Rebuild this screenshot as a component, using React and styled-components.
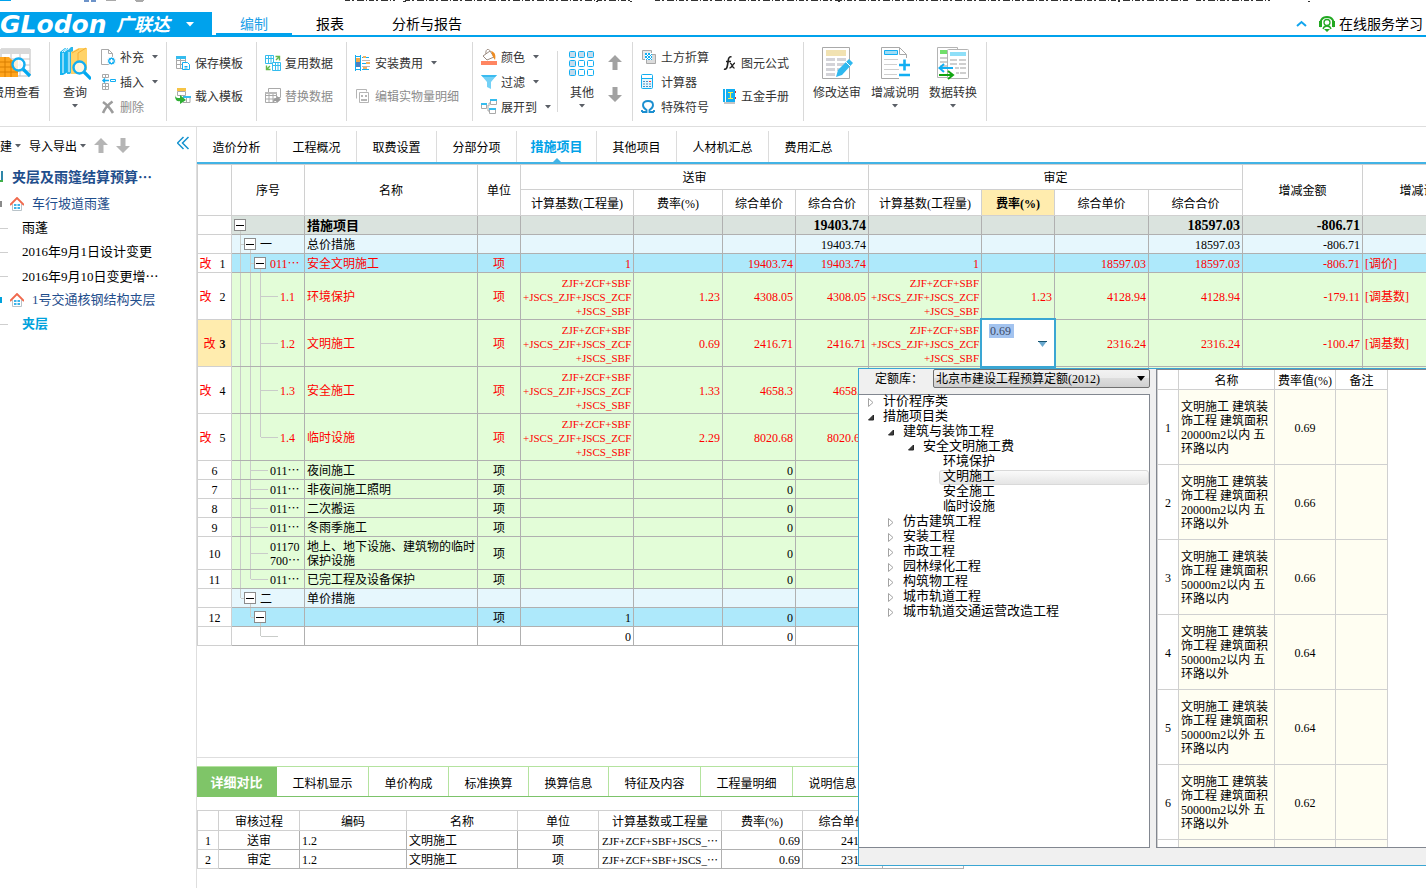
import React from 'react';
import styled, { createGlobalStyle, css } from 'styled-components';

const CJK = '"Noto Sans CJK SC", sans-serif';
const SONG = '"Liberation Serif", "Noto Sans CJK SC", serif';

const GlobalStyle = createGlobalStyle`
  *, *::before, *::after { box-sizing: border-box; }
  body { margin: 0; background: #fff; overflow: hidden; font: 12px/14px ${SONG}; color: #000; }
  button, input, select { font: inherit; color: inherit; margin: 0; }
  button { border: 0; background: none; padding: 0; white-space: nowrap; }
  a { color: inherit; text-decoration: none; }
  svg { display: block; flex: none; }
`;

/* ---------- shell ---------- */

const Page = styled.div`
  display: flex;
  flex-direction: column;
  height: 100vh;
`;

const TitleStrip = styled.div`
  flex: none;
  height: 12px;
  overflow: hidden;
`;

const NavBar = styled.header`
  display: flex;
  flex: none;
  height: 25px;
  font: 14px/22px ${CJK};
  border-bottom: 2px solid #00a2ec;
`;

const Brand = styled.button`
  display: flex;
  align-items: center;
  width: 212px;
  height: 25px;
  background: #00a2ec;
  color: #fff;
  overflow: hidden;
`;

const BrandLatin = styled.span`
  font: italic bold 25px/24px "DejaVu Sans", sans-serif;
  width: 116px;
  text-align: left;
`;

const BrandCjk = styled.span`
  font: italic bold 18px/24px ${CJK};
  width: 70px;
  padding-bottom: 4px;
  text-align: left;
`;

const NavTabs = styled.nav`
  display: flex;
  flex: 1;
  padding-left: 4px;
`;

const NavTab = styled.a`
  height: 25px;
  padding: 0 24px;
  color: ${(p) => (p.$active ? '#1e9fe8' : '#000')};
  border-bottom: ${(p) => (p.$active ? '4px solid #00a2ec' : '0')};
`;

const Service = styled.a`
  display: flex;
  align-items: center;
  gap: 4px;
  height: 23px;
  padding-right: 3px;
  line-height: 23px;
`;

const CaretUp = styled.button`
  display: flex;
  align-items: center;
  height: 23px;
  margin-right: 12px;
`;

/* ---------- ribbon ---------- */

const Ribbon = styled.div`
  display: flex;
  flex: none;
  height: 90px;
  padding: 5px 0;
  border-bottom: 1px solid #dedede;
  font: 12px/16px ${CJK};
  color: #333;
`;

const Group = styled.div`
  display: flex;
  flex: none;
  height: 79px;
  width: ${(p) => p.$w}px;
  padding-left: ${(p) => p.$pad || 0}px;
  border-right: 1px solid #d9d9d9;
`;

const Stack = styled.div`
  display: flex;
  flex-direction: column;
  padding-top: ${(p) => (p.$two ? 4 : 2)}px;
  margin-left: ${(p) => p.$gap || 0}px;
  width: ${(p) => p.$w || 'auto'};
`;

const SmallButton = styled.button`
  display: flex;
  align-items: center;
  gap: 4px;
  height: ${(p) => (p.$tall ? 33 : 25)}px;
  color: ${(p) => (p.$muted ? '#8c8c8c' : '#333')};

  svg + span + svg { margin-left: 4px; }
`;

const BigButton = styled.button`
  display: flex;
  flex-direction: column;
  align-items: center;
  flex: none;
  width: ${(p) => p.$w || 58}px;
  margin-left: ${(p) => (p.$clipped ? -13 : 0)}px;
  padding-top: 4px;
  gap: 4px;
`;

const Divider = styled.div`
  width: 1px;
  height: 61px;
  margin: 9px 0 0 ${(p) => p.$gap}px;
  background: #d9d9d9;
`;

const ArrowStack = styled.div`
  display: flex;
  flex-direction: column;
  gap: 17px;
  padding: 13px 0 0 2px;
`;

/* ---------- sidebar ---------- */

const Body = styled.div`
  display: flex;
  flex: 1;
  min-height: 0;
`;

const Sidebar = styled.aside`
  flex: none;
  width: 197px;
  border-right: 1px solid #dedede;
  font-size: 13px;
`;

const SideTools = styled.div`
  display: flex;
  align-items: center;
  height: 37px;
  gap: 8px;
  font: 12px/16px ${CJK};

  button { display: flex; align-items: center; gap: 3px; }
`;

const Collapse = styled.button`
  margin: 0 6px 6px auto;
`;

const ProjectTitle = styled.div`
  display: flex;
  align-items: center;
  gap: 8px;
  height: 26px;
  margin-bottom: 2px;
  font-size: 14px;
  font-weight: bold;
  color: #1f4e8c;
`;

const TreeItem = styled.a`
  display: flex;
  align-items: center;
  height: 24px;
  gap: ${(p) => (p.$house ? 8 : 14)}px;
  color: ${(p) => (p.$current ? '#00a2dc' : p.$house ? '#1f4e8c' : '#000')};
  font-weight: ${(p) => (p.$current ? 'bold' : 'normal')};
`;

const Stub = styled.i`
  width: ${(p) => (p.$mark ? 2 : 8)}px;
  height: ${(p) => (p.$mark ? 6 : 1)}px;
  background: ${(p) => p.$mark || '#cfcfcf'};
`;

const Dots = styled.span`
  display: inline-block;
  line-height: 1;
  font-family: ${CJK};
`;

/* ---------- main panel ---------- */

const Content = styled.main`
  position: relative;
  display: flex;
  flex-direction: column;
  flex: 1;
  min-width: 0;
  overflow: hidden;
`;

const ModuleTabs = styled.nav`
  display: flex;
  flex: none;
  height: 37px;
  padding-top: 4px;
  border-bottom: 2px solid #42b3e5;
`;

const ModuleTab = styled.a`
  position: relative;
  flex: none;
  width: ${(p) => (p.$wide ? 92 : 80)}px;
  height: 31px;
  border-right: 1px solid #dcdcdc;
  text-align: center;
  line-height: 34px;
  ${(p) =>
    p.$active &&
    css`
      color: #00a2e8;
      font-size: 13px;
      font-weight: bold;
      line-height: 32px;
      &::after {
        content: '';
        position: absolute;
        left: 50%;
        bottom: 0;
        margin-left: -4px;
        border: 4px solid transparent;
        border-top: 0;
        border-bottom-color: #42b3e5;
      }
    `}
`;

const GridArea = styled.section`
  flex: 1;
  min-height: 0;
  overflow: hidden;
`;

const Sheet = styled.table`
  width: ${(p) => p.$w}px;
  table-layout: fixed;
  border-collapse: separate;
  border-spacing: 0;
  border-top: 1px solid #d0d0d0;
  border-left: 1px solid #d0d0d0;
`;

const HeadCell = styled.th`
  height: ${(p) => p.$h || 26}px;
  padding: 2px 0 0;
  font-weight: ${(p) => (p.$hot ? 'bold' : 'normal')};
  background: ${(p) => (p.$hot ? '#ffecae' : '#fff')};
  border: solid #d0d0d0;
  border-width: 0 1px 1px 0;
  white-space: nowrap;
  overflow: hidden;
`;

const ROW_FILL = { root: '#dae3de', section: '#e6f7fd', item: '#aee9fb', leaf: '#e3fdd8', blank: '#fff' };

const Cell = styled.td`
  position: ${(p) => (p.$host ? 'relative' : 'static')};
  height: ${(p) => p.$h || 19}px;
  padding: 2px 2px 0;
  border: solid #b0b0b0;
  border-width: 0 1px 1px 0;
  text-align: ${(p) => p.$align || 'right'};
  background: ${(p) => p.$fill || 'transparent'};
  font-size: ${(p) => (p.$formula ? 11 : 12)}px;
  overflow: ${(p) => (p.$host ? 'visible' : 'hidden')};
`;

const NumCell = styled(Cell)`
  padding: 2px ${(p) => (p.$changed && !p.$current ? 4 : 0)}px 0 0;
  border-color: #d0d0d0;
  background: ${(p) => (p.$current ? '#ffecae' : '#fff')};
  color: #000;
  font-weight: ${(p) => (p.$current ? 'bold' : 'normal')};
  text-align: center;
`;

const Changed = styled.span`
  margin-right: ${(p) => (p.$tight ? 4 : 8)}px;
  font-weight: normal;
  color: #f00;
`;

const Row = styled.tr`
  background: ${(p) => ROW_FILL[p.$kind]};
  color: ${(p) => (p.$red ? '#f00' : '#000')};

  ${(p) =>
    p.$kind === 'root' &&
    css`
      font-weight: bold;
      td { font-size: 14px; }
      td:nth-child(3) { font-size: 13px; }
    `}
`;

const guide = (g) => {
  const [dir, x, span] = g.split(':');
  const ink = 'linear-gradient(#c9ccc9, #c9ccc9)';
  if (dir === 'h') return `${ink} ${x}px center / ${span}px 1px no-repeat`;
  if (span === 'top') return `${ink} ${x}px top / 1px 50% no-repeat`;
  if (span === 'end') return `${ink} ${x}px bottom / 1px 50% no-repeat`;
  return `${ink} ${x}px top / 1px 100% no-repeat`;
};

const TreeCell = styled(Cell)`
  padding: 0;
  text-align: left;
  background: ${(p) => p.$guides.map(guide).join(', ')};
`;

const TreeInner = styled.div`
  display: flex;
  align-items: center;
  gap: 4px;
  padding-left: ${(p) => p.$indent}px;

  > span { padding-top: 2px; }
`;

const Toggle = styled.button`
  display: flex;
  align-items: center;
  justify-content: center;
  width: 12px;
  height: 12px;
  border: 1px solid #8c8c8c;
  background: #fff;

  &::before { content: ''; width: 8px; height: 1px; background: #000; }
`;

const Editor = styled.div`
  position: absolute;
  inset: -2px;
  z-index: 2;
  display: flex;
  flex-direction: column;
  align-items: flex-start;
  padding: 4px 7px;
  border: 2px solid #3aa6d3;
  background: #fff;
`;

const EditorInput = styled.input`
  width: 25px;
  height: 14px;
  padding: 0 1px;
  border: 0;
  outline: 0;
  background: #a3c3ef;
  color: #3d4a66;
`;

const EditorDrop = styled.button`
  align-self: flex-end;
  margin-top: 3px;
`;

/* ---------- lower panel ---------- */

const DetailPanel = styled.section`
  flex: none;
  height: 131px;
  padding-top: 8px;
  border-top: 1px solid #dedede;
`;

const DetailTabs = styled.nav`
  display: flex;
  height: 31px;
  margin-bottom: 13px;
  border-top: 1px solid #b4e39f;
  border-bottom: 1px solid #7cc36a;
`;

const DetailTab = styled.a`
  flex: none;
  width: ${(p) => (p.$wide ? 92 : 80)}px;
  height: ${(p) => (p.$active ? 30 : 29)}px;
  border-right: 1px solid ${(p) => (p.$active ? '#7fc568' : '#b4e39f')};
  text-align: center;
  line-height: ${(p) => (p.$active ? 32 : 34)}px;
  background: ${(p) => (p.$active ? '#7fc568' : 'none')};
  color: ${(p) => (p.$active ? '#fff' : '#000')};
  font-size: ${(p) => (p.$active ? 13 : 12)}px;
  font-weight: ${(p) => (p.$active ? 'bold' : 'normal')};
`;

/* ---------- drop-down panel ---------- */

const Popup = styled.div`
  position: absolute;
  z-index: 1;
  left: 661px;
  right: -2px;
  top: 241px;
  height: 498px;
  display: flex;
  gap: 6px;
  padding-bottom: 17px;
  border: 1px solid #3aa6d3;
  background: #f0f0f0;
`;

const PickerColumn = styled.div`
  display: flex;
  flex-direction: column;
  flex: none;
  width: 291px;
`;

const LibraryBar = styled.div`
  display: flex;
  align-items: center;
  gap: 10px;
  height: 25px;
  padding: 0 0 6px 16px;

  label { width: 48px; white-space: nowrap; }
`;

const SelectBox = styled.div`
  display: grid;
  flex: 1;

  > * { grid-area: 1 / 1; }
  > svg { justify-self: end; align-self: center; margin-right: 5px; pointer-events: none; }
`;

const Library = styled.select`
  appearance: none;
  height: 19px;
  padding: 0 2px;
  border: 1px solid #707070;
  border-radius: 2px;
  background: linear-gradient(#f2f2f2, #ebebeb 50%, #dddddd 50%, #cfcfcf);
  line-height: 16px;
`;

const NormTree = styled.ul`
  flex: 1;
  margin: 0;
  padding: 0;
  list-style: none;
  border: solid #828790;
  border-width: 1px 1px 1px 0;
  background: #fff;
  font-size: 13px;
  line-height: 14px;
`;

const NormItem = styled.li`
  display: flex;
  align-items: center;
  gap: 4px;
  height: 15px;
  padding-left: ${(p) => 8 + p.$level * 20}px;
  white-space: nowrap;

  > svg { width: 8px; }
`;

const NormLabel = styled.span`
  flex: ${(p) => (p.$picked ? 1 : 'none')};
  margin-left: ${(p) => (p.$leaf ? 12 : 0)}px;
  height: 15px;
  padding: 0 3px;
  border: 1px solid ${(p) => (p.$picked ? '#d9d9d9' : 'transparent')};
  border-radius: 3px;
  background: ${(p) => (p.$picked ? 'linear-gradient(#fafafa, #e5e5e5)' : 'none')};
  line-height: 10px;
`;

const RateBox = styled.div`
  flex: 1;
  overflow: hidden;
  border: solid #828790;
  border-width: 1px 0 1px 1px;
  background: #fff;
`;

const RateSheet = styled(Sheet)`
  border-top: 0;
`;

const RateCell = styled(Cell)`
  border-color: #d0d0d0;
`;

/* ---------- icons ---------- */

const Svg = ({ w = 16, h = 16, vb, children }) => (
  <svg width={w} height={h} viewBox={vb || `0 0 ${w} ${h}`} fill="none" aria-hidden="true">
    {children}
  </svg>
);

const Down = ({ color = '#5a5f66' }) => (
  <Svg w={6} h={4}><path d="M0 0h6L3 3.6z" fill={color} /></Svg>
);

const Magnifier = ({ x, y }) => (
  <g transform={`translate(${x} ${y})`}>
    <path d="M12 12l7 7" stroke="#00a8f0" strokeWidth="3.2" />
    <circle cx="7.5" cy="7.5" r="6" fill="#fff" fillOpacity="0.8" stroke="#12aef2" strokeWidth="2.4" />
  </g>
);

const CostIcon = () => (
  <Svg w={34} h={34}>
    <path d="M2 3h29v27H2z" fill="#fff" stroke="#b9b9b9" />
    <path d="M2 3h29v5H2z" fill="#d9d9d9" />
    <path d="M2 13h29M2 19h29M2 25h29M12 8v22M21 8v22" stroke="#c4c4c4" />
    <path d="M1 11h9l3 3h6v17H1z" fill="#ffa51e" />
    <path d="M1 16h11M1 21h18M1 26h18M6 11v20M12 14v17" stroke="#d97f00" />
    <Magnifier x={12} y={11} />
  </Svg>
);

const SearchBooks = () => (
  <Svg w={32} h={34}>
    <path d="M1 6l5-4h3v24l-5 3H1z" fill="#16b4f0" />
    <path d="M3 6l5-4M5 6l5-4M4 7v20" stroke="#fff" />
    <path d="M8 5l4-4h2v24l-3 3H8z" fill="#29b8ee" />
    <path d="M10 6v20" stroke="#fff" />
    <path d="M12 6l8-4h8v22l-9 4h-7z" fill="#ffd368" />
    <path d="M19 7l8-5M19 7v20M13 7l7-4" stroke="#f5ae35" />
    <Magnifier x={13} y={14} />
  </Svg>
);

const AddDoc = () => (
  <Svg>
    <path d="M1.500 .500h7l4 4v11h-11zM8.500 .500v4h4" stroke="#a9a9a9" fill="#fff" />
    <circle cx="11.500" cy="12" r="4" fill="#12aef2" stroke="#fff" />
    <path d="M9.500 12h4M11.500 10v4" stroke="#fff" strokeWidth="1.300" />
  </Svg>
);

const InsertIcon = () => (
  <Svg>
    <path d="M2.500 .500h6v3h-6zM5.500 .500v3M2.500 9.500h6v6h-6zM2.500 12.500h6M5.500 9.500v6" stroke="#a9a9a9" />
    <path d="M3 6.500h6M5 4.500L3 6.500l2 2" stroke="#12aef2" strokeWidth="1.500" />
    <path d="M10.500 5.500h5v2h-5z" stroke="#12aef2" />
  </Svg>
);

const DeleteIcon = () => (
  <Svg><path d="M3 3c3 2 7 6 10 11M12.500 2.500C9 5 5 9 3 14" stroke="#9c9c9c" strokeWidth="2.600" /></Svg>
);

const SaveTpl = () => (
  <Svg>
    <path d="M1.500 1.500h9v12h-9zM1.500 5.500h9M1.500 9.500h9M5.500 4v10" stroke="#a9a9a9" />
    <path d="M1 1h10v3H1z" fill="#35bcee" />
    <path d="M7.500 7.500h5l2 2v5h-7z" fill="#fff" stroke="#12aef2" />
    <path d="M9.500 11.500h3M9.500 13h3" stroke="#12aef2" />
  </Svg>
);

const LoadTpl = () => (
  <Svg>
    <path d="M2 0h9v3H2z" fill="#f6c445" />
    <path d="M2.500 3.500h8v4h-8zM8 9.500h7v5H8zM11.500 9v6" stroke="#a9a9a9" />
    <path d="M8 8h8v2H8z" fill="#35bcee" />
    <path d="M0 6c0 4 2 4 5 4V7l6 5-6 4v-3C1 14 0 11 0 6z" fill="#2fae35" />
  </Svg>
);

const ReuseIcon = () => (
  <Svg>
    <path d="M.500 .500h8v8h-8zM.500 3.500h8M3.500 .500v8M6 .500v8" stroke="#35bcee" />
    <path d="M7.500 7.500h8v8h-8zM7.500 10.500h8M10.500 7.500v8M13 7.500v8" stroke="#35bcee" fill="#fff" />
    <path d="M10.500 1.500h4v4M14 2l-3 3M1.500 10.500v4h4M2 14l3-3" stroke="#63b84c" strokeWidth="1.400" />
  </Svg>
);

const ReplaceIcon = () => (
  <Svg>
    <path d="M3.500 .500h12v9h-12z" stroke="#a9a9a9" fill="#fff" />
    <path d="M.500 4.500h11v10H.500zM.500 7.500h11M.500 11h11M4 4.500v10M8 4.500v10" stroke="#a9a9a9" fill="#fff" />
    <path d="M0 4h12v2H0z" fill="#bbb" />
    <path d="M8 15c0-4 1-5 4-5V8l4 3.500-4 3.500v-2c-2 0-3 0-4 2z" fill="#9c9c9c" />
  </Svg>
);

const InstallIcon = () => (
  <Svg>
    <path d="M0 0h1v16H0zM5 0h1v16H5zM0 1h6v1H0zM0 14h6v1H0z" fill="#12aef2" />
    <path d="M1 3h4v4H1z" fill="#f0a94a" />
    <path d="M1 7h4v5H1z" fill="#4b7fc0" />
    <path d="M7 2.500h7M7 8.500h7M7 14.500h7" stroke="#12aef2" />
    <path d="M8 1h3v2H8zM11 7h4v2h-4zM8 12h4v2H8z" fill="#f3b25c" />
    <path d="M7 5.500h8M7 11.500h8" stroke="#b9b9b9" />
  </Svg>
);

const DetailDoc = () => (
  <Svg>
    <path d="M1.500 10.500v-9h10v2M4.500 4.500h9v10h-9z" stroke="#b5b5b5" />
    <path d="M6 7h2v2H6zM10 7h2v2h-2zM6 11h6v2H6z" fill="#b5b5b5" />
  </Svg>
);

const PaintIcon = () => (
  <Svg>
    <path d="M0 12h16v4H0z" fill="#ff8561" />
    <path d="M2 7l7-5 4 6-7 3z" fill="#fff" stroke="#9b8b80" />
    <path d="M5 5c-1-5 3-6 4-3" stroke="#9b8b80" />
    <path d="M10 2c4 1 5 4 4 9l-2-3z" fill="#ee8b20" />
  </Svg>
);

const FilterIcon = () => (
  <Svg>
    <path d="M0 1h16l-6 7v7l-4-2V8z" fill="#74d1f6" />
    <path d="M0 1h16l-2 2H2z" fill="#3abbf0" />
  </Svg>
);

const ExpandIcon = () => (
  <Svg>
    <path d="M.500 4.500h5v5h-5zM9.500 .500h6v5h-6zM8.500 9.500h6v5h-6zM6 7h2V4h1M7 8v4h1" stroke="#a9a9a9" fill="#fff" />
    <path d="M0 4h6v2H0zM9 0h7v2H9zM8 9h7v2H8z" fill="#35bcee" />
  </Svg>
);

const NineGrid = () => (
  <Svg w={26} h={34}>
    {[0, 1, 2].map((r) =>
      [0, 1, 2].map((c) => (
        <rect key={`${r}${c}`} x={c * 9 + 0.5} y={r * 9 + 5.5} width="6" height="6" rx="1"
          fill={r === 0 || c === 0 ? '#c6dcec' : '#fff'} stroke="#12aef2" />
      ))
    )}
  </Svg>
);

const BigArrow = ({ down, color = '#a2a2a2' }) => (
  <Svg w={14} h={15}>
    <path d={down ? 'M4.500 0h5v8H14l-7 7-7-7h4.500z' : 'M4.500 15h5V7H14L7 0 0 7h4.500z'} fill={color} />
  </Svg>
);

const EarthIcon = () => (
  <Svg>
    <path d="M1.500 1.500h9v9h-9z" fill="#e9e9e9" stroke="#a9a9a9" />
    <path d="M5.500 5.500h9v9h-9z" fill="#dcdcdc" stroke="#a9a9a9" />
    <path d="M4 4h7v7H4z" fill="#fff" />
    <path d="M4 6l2-2M4 9l5-5M5 11l6-6M8 11l3-3M4 4l7 7M7 4l4 4M4 7l4 4" stroke="#12aef2" />
  </Svg>
);

const CalcIcon = () => (
  <Svg>
    <rect x=".500" y=".500" width="11" height="14" rx="1" fill="#e5f6fd" stroke="#12aef2" />
    <path d="M1 1h10v3H1z" fill="#fff" /><path d="M0 4h12v1H0z" fill="#12aef2" />
    <path d="M2 7.500h2M5 7.500h2M2 10h2M5 10h2M8 10h2M2 12.500h2M5 12.500h2M8 12.500h2" stroke="#4b8fc4" />
    <path d="M8 7h2v1H8z" fill="#f33" />
  </Svg>
);

const OmegaIcon = () => (
  <Svg><path d="M1 13h4.500v-2C3 9.500 2 8 2 6 2 3.500 4 2 7 2s5 1.500 5 4c0 2-1 3.500-3.500 5v2H13M1 13v-2M13 13v-2" stroke="#1c8fd0" strokeWidth="1.900" /></Svg>
);

const FxIcon = () => (
  <Svg w={14} h={16}>
    <path d="M1 14c2 1 3-1 3.500-4l1-6C6 2 7 1.500 8.500 2M3 6.500h5" stroke="#222" strokeWidth="1.600" />
    <path d="M7 8.500c2-1 2 5 4.500 4.500M12 8c-2 0-3 5-5.500 5" stroke="#222" strokeWidth="1.400" />
  </Svg>
);

const HandbookIcon = () => (
  <Svg w={14} h={16}>
    <path d="M0 1h12v13H0z" fill="#12aef2" />
    <path d="M2.500 1v13" stroke="#fff" />
    <path d="M5 4.500h5M5 10.500h5M7.500 4.500v6" stroke="#fff04a" strokeWidth="1.200" />
    <path d="M12 3h1v2h-1zM12 9h1v2h-1z" fill="#c33" />
    <path d="M1 15h11" stroke="#8b8b8b" />
  </Svg>
);

const EditSheet = () => (
  <Svg w={32} h={34}>
    <path d="M1.500 1.500h27v31h-27z" fill="#fff" stroke="#a9a9a9" />
    <path d="M5 4h20v6H5z" fill="#f1e2b2" />
    <path d="M5 12h9v3H5zM16 12h9v3h-9zM5 17h9v3H5zM16 17h9v3h-9zM5 22h9v3H5zM16 22h5v3h-5zM5 27h9v3H5z" fill="#d3d3d8" />
    <path d="M15 31l2-7 11-11 4 4-11 12z" fill="#2fb8ef" />
    <path d="M25 16l4 4" stroke="#fff" />
  </Svg>
);

const NoteSheet = () => (
  <Svg w={30} h={34}>
    <path d="M1.500 1.500h18l7 7v24h-25z" fill="#fff" stroke="#a9a9a9" />
    <path d="M19 12h11v21H19z" fill="#fff" />
    <path d="M19.500 1.500v7h7" stroke="#a9a9a9" />
    <path d="M4.500 4.500h13v4h-13z" fill="#9edcf5" stroke="#12aef2" />
    <path d="M4 13.500h14M4 18.500h13M4 23.500h15M4 28.500h13" stroke="#cfcfcf" />
    <path d="M19 19h11M24.500 13.500v11M19 29h11" stroke="#12aef2" strokeWidth="2.600" />
  </Svg>
);

const ConvertSheet = () => (
  <Svg w={34} h={34}>
    <path d="M1.500 1.500h20v30h-20z" fill="#fff" stroke="#b4b4b4" />
    <path d="M4 4h9v4H4z" fill="#72df6b" />
    <path d="M4 11h7v2H4zM4 15h7v2H4zM4 19h7v2H4z" fill="#cfcfcf" />
    <rect x="11.500" y="3.500" width="21" height="29" rx="1" fill="#fff" stroke="#b4b4b4" />
    <path d="M14 6h16v4H14z" fill="#8edff8" />
    <path d="M14 13h7v2h-7zM23 13h7v2h-7zM14 17h7v2h-7zM23 17h7v2h-7zM19 21h4v2h-4zM24 21h6v2h-6zM20 26h3v2h-3zM24 26h6v2h-6z" fill="#cfcfcf" />
    <path d="M17 22H4M8 18l-4.500 4L8 26" stroke="#12aef2" strokeWidth="2" />
    <path d="M3 29h13M12 25l5 4-5 4" stroke="#12a512" strokeWidth="2" />
  </Svg>
);

const HeadsetIcon = () => (
  <Svg>
    <path d="M2 11C0 5 3 1 8 1s8 4 6 10" stroke="#22a822" strokeWidth="2" />
    <path d="M0 5h3v6H0zM13 5h3v6h-3zM5 13h6l-3 3z" fill="#22a822" />
    <circle cx="8" cy="6.500" r="3" stroke="#22a822" strokeWidth="1.300" />
    <path d="M4 13c1-4 7-4 8 0" stroke="#22a822" strokeWidth="1.300" />
  </Svg>
);

const HouseIcon = () => (
  <Svg w={14} h={14}>
    <path d="M2.500 7v6.500h9V7" stroke="#b9c3c9" fill="#fff" />
    <path d="M0 8l7-7 7 7" stroke="#f0694d" strokeWidth="1.900" />
    <path d="M4 7h2.500v2H4zM7.500 7H10v2H7.500zM4 10h2.500v2H4zM7.500 10H10v2H7.500z" fill="#3db3e8" />
  </Svg>
);

const ChevronsLeft = () => (
  <Svg w={13} h={14}><path d="M6.500 1l-6 6 6 6M11.500 1l-6 6 6 6" stroke="#1492cf" strokeWidth="1.500" /></Svg>
);

const Closed = () => (
  <Svg w={8} h={9}><path d="M1.500 .500v8L6 4.500z" stroke="#a3a3a3" /></Svg>
);
const Opened = () => (
  <Svg w={8} h={9}><path d="M6.500 2v5h-5z" fill="#3d3d3d" stroke="#262626" /></Svg>
);

const TitleMarks = () => (
  <Svg w={1320} h={3}>
    <path d="M0 0h11v1H0z" fill="#00a2ec" />
    <path d="M84 0h5v2h-5zM91 0h5v2h-5z" fill="#6d93c9" />
    <path d="M106 .500h10M135 .500h9M136 1.500h7" stroke="#a9a9a9" />
    <path d="M345 .500h50M405 .500h225M655 .500h535M1196 .500h74" stroke="#333" strokeDasharray="5 2 2 3 7 2 1 2" />
    <path d="M403 1.500h3M596 1.500h2M630 1.500h2M838 1.500h2M1118 1.500h2M1308 1.500h2" stroke="#333" />
  </Svg>
);

/* ---------- data ---------- */

const V = ['v:8', 'v:18', 'v:28'];
const F = ['ZJF+ZCF+SBF', '+JSCS_ZJF+JSCS_ZCF', '+JSCS_SBF'];
const D = <Dots>…</Dots>;

const ROWS = [
  { kind: 'root', toggle: 1, indent: 2, guides: ['v:8:end'], name: '措施项目', v: ['', '', '', '19403.74', '', '', '', '18597.03', '-806.71', ''] },
  { kind: 'section', toggle: 1, indent: 12, guides: ['v:8', 'h:9:3', 'v:18:end'], code: '一', name: '总价措施', v: ['', '', '', '19403.74', '', '', '', '18597.03', '-806.71', ''] },
  { kind: 'item', red: 1, n: 1, toggle: 1, indent: 22, guides: ['v:8', 'v:18', 'h:19:3', 'v:28:end'], code: <>011{D}</>, name: '安全文明施工', unit: '项', v: ['1', '', '19403.74', '19403.74', '1', '', '18597.03', '18597.03', '-806.71', '[调价]'] },
  { kind: 'leaf', red: 1, n: 2, h: 47, indent: 48, guides: [...V, 'h:29:17'], code: '1.1', name: '环境保护', unit: '项', v: [F, '1.23', '4308.05', '4308.05', F, '1.23', '4128.94', '4128.94', '-179.11', '[调基数]'] },
  { kind: 'leaf', red: 1, n: 3, h: 47, current: 1, indent: 48, guides: [...V, 'h:29:17'], code: '1.2', name: '文明施工', unit: '项', v: [F, '0.69', '2416.71', '2416.71', F, 'edit', '2316.24', '2316.24', '-100.47', '[调基数]'] },
  { kind: 'leaf', red: 1, n: 4, h: 47, indent: 48, guides: [...V, 'h:29:17'], code: '1.3', name: '安全施工', unit: '项', v: [F, '1.33', '4658.3', '4658.3', '', '', '', '', '', ''] },
  { kind: 'leaf', red: 1, n: 5, h: 47, indent: 48, guides: ['v:8', 'v:18', 'v:28:top', 'h:29:17'], code: '1.4', name: '临时设施', unit: '项', v: [F, '2.29', '8020.68', '8020.68', '', '', '', '', '', ''] },
  ...['夜间施工', '非夜间施工照明', '二次搬运', '冬雨季施工', '地上、地下设施、建筑物的临时保护设施', '已完工程及设备保护'].map((name, i) => ({
    kind: 'leaf', n: 6 + i, h: i === 4 ? 33 : 19, indent: 38,
    guides: ['v:8', i === 5 ? 'v:18:top' : 'v:18', 'h:19:17'],
    code: i === 4 ? <>01170<br />700{D}</> : <>011{D}</>,
    name, unit: '项', v: ['', '', '0', '', '', '', '', '', '', ''],
  })),
  { kind: 'section', toggle: 1, indent: 12, guides: ['v:8:top', 'h:9:3', 'v:18:end'], code: '二', name: '单价措施', v: Array(10).fill('') },
  { kind: 'item', n: 12, toggle: 1, indent: 22, guides: ['v:18:top', 'h:19:3', 'v:28:end'], name: '', unit: '项', v: ['1', '', '0', '', '', '', '', '', '', ''] },
  { kind: 'blank', indent: 38, guides: ['v:28:top', 'h:29:17'], name: '', v: ['0', '', '0', '', '', '', '', '', '', ''] },
];

const NORMS = [
  [0, '计价程序类', 'c'], [0, '措施项目类', 'o'], [1, '建筑与装饰工程', 'o'], [2, '安全文明施工费', 'o'],
  [3, '环境保护'], [3, '文明施工', 'sel'], [3, '安全施工'], [3, '临时设施'],
  [1, '仿古建筑工程', 'c'], [1, '安装工程', 'c'], [1, '市政工程', 'c'], [1, '园林绿化工程', 'c'],
  [1, '构筑物工程', 'c'], [1, '城市轨道工程', 'c'], [1, '城市轨道交通运营改造工程', 'c'],
];

const RATES = [
  ['20000m2以内 五环路以内', '0.69'], ['20000m2以内 五环路以外', '0.66'],
  ['50000m2以内 五环路以内', '0.66'], ['50000m2以内 五环路以外', '0.64'],
  ['50000m2以外 五环路以内', '0.64'], ['50000m2以外 五环路以外', '0.62'],
];

const Cols = ({ w }) => (
  <colgroup>{w.map((x, i) => <col key={i} style={{ width: x }} />)}</colgroup>
);

const MAIN_COLS = [34, 73, 173, 43, 113, 89, 73, 73, 113, 73, 94, 94, 120, 122];
const DETAIL_COLS = [21, 81, 107, 111, 81, 123, 81, 80, 81];
const RATE_COLS = [21, 96, 61, 52];
const sum = (a) => a.reduce((x, y) => x + y, 1);

/* ---------- pieces ---------- */

const Small = ({ icon, children, drop, ...rest }) => (
  <SmallButton type="button" {...rest}>
    {icon}<span>{children}</span>{drop && <Down />}
  </SmallButton>
);

const Big = ({ icon, children, drop, ...rest }) => (
  <BigButton type="button" {...rest}>
    {icon}<span>{children}</span>{drop && <Down />}
  </BigButton>
);

const Value = ({ value, h, last }) => {
  if (value === 'edit') {
    return (
      <Cell $h={h} $host>
        <Editor>
          <EditorInput aria-label="费率" defaultValue="0.69" />
          <EditorDrop type="button" aria-label="展开">
            <Svg w={9} h={6}><path d="M0 0h9L4.500 6z" fill="#6aa9cf" /><path d="M0 0h9v1H0z" fill="#17536f" /></Svg>
          </EditorDrop>
        </Editor>
      </Cell>
    );
  }
  const formula = Array.isArray(value);
  return (
    <Cell $h={h} $formula={formula} $align={last ? 'left' : 'right'}>
      {formula ? <>{value[0]}<br />{value[1]}<br />{value[2]}</> : value}
    </Cell>
  );
};

const MainGrid = () => (
  <Sheet $w={sum(MAIN_COLS)}>
    <Cols w={MAIN_COLS} />
    <thead>
      <tr>
        <HeadCell rowSpan={2} />
        <HeadCell rowSpan={2}>序号</HeadCell>
        <HeadCell rowSpan={2}>名称</HeadCell>
        <HeadCell rowSpan={2}>单位</HeadCell>
        <HeadCell colSpan={4} $h={25}>送审</HeadCell>
        <HeadCell colSpan={4} $h={25}>审定</HeadCell>
        <HeadCell rowSpan={2}>增减金额</HeadCell>
        <HeadCell rowSpan={2}>增减说明</HeadCell>
      </tr>
      <tr>
        {[0, 1].map((k) => (
          <React.Fragment key={k}>
            <HeadCell>计算基数(工程量)</HeadCell>
            <HeadCell $hot={k === 1}>费率(%)</HeadCell>
            <HeadCell>综合单价</HeadCell>
            <HeadCell>综合合价</HeadCell>
          </React.Fragment>
        ))}
      </tr>
    </thead>
    <tbody>
      {ROWS.map((r, i) => (
        <Row key={i} $kind={r.kind} $red={r.red}>
          <NumCell $h={r.h} $current={r.current} $changed={r.red}>
            {r.red && <Changed $tight={r.current}>改</Changed>}{r.n}
          </NumCell>
          <TreeCell $h={r.h} $guides={r.guides}>
            <TreeInner $indent={r.indent}>
              {r.toggle && <Toggle type="button" aria-label="折叠" />}
              {r.code && <span>{r.code}</span>}
            </TreeInner>
          </TreeCell>
          <Cell $h={r.h} $align="left">{r.name}</Cell>
          <Cell $h={r.h} $align="center">{r.unit}</Cell>
          {r.v.map((value, k) => <Value key={k} value={value} h={r.h} last={k === 9} />)}
        </Row>
      ))}
    </tbody>
  </Sheet>
);

const DetailGrid = () => (
  <Sheet $w={sum(DETAIL_COLS)}>
    <Cols w={DETAIL_COLS} />
    <thead>
      <tr>
        {['', '审核过程', '编码', '名称', '单位', '计算基数或工程量', '费率(%)', '综合单价', ''].map((t, i) => (
          <HeadCell key={i} $h={20}>{t}</HeadCell>
        ))}
      </tr>
    </thead>
    <tbody>
      {[['送审', '2416.71'], ['审定', '2316.24']].map(([stage, price], i) => (
        <tr key={stage}>
          <NumCell>{i + 1}</NumCell>
          <Cell $align="center">{stage}</Cell>
          <Cell $align="left">1.2</Cell>
          <Cell $align="left">文明施工</Cell>
          <Cell $align="center">项</Cell>
          <Cell $align="center" $formula>ZJF+ZCF+SBF+JSCS_{D}</Cell>
          <Cell>0.69</Cell>
          <Cell>{price}</Cell>
          <Cell />
        </tr>
      ))}
    </tbody>
  </Sheet>
);

const RatePicker = () => (
  <Popup>
    <PickerColumn>
      <LibraryBar>
        <label htmlFor="library">定额库：</label>
        <SelectBox>
          <Library id="library" defaultValue="bj2012">
            <option value="bj2012">北京市建设工程预算定额(2012)</option>
          </Library>
          <Svg w={8} h={5}><path d="M0 0h8L4 5z" fill="#000" /></Svg>
        </SelectBox>
      </LibraryBar>
      <NormTree>
        {NORMS.map(([level, label, state]) => (
          <NormItem key={label} $level={level}>
            {state === 'c' && <Closed />}
            {state === 'o' && <Opened />}
            <NormLabel $picked={state === 'sel'} $leaf={level === 3}>{label}</NormLabel>
          </NormItem>
        ))}
      </NormTree>
    </PickerColumn>
    <RateBox>
      <RateSheet $w={sum(RATE_COLS)}>
        <Cols w={RATE_COLS} />
        <thead>
          <tr>{['', '名称', '费率值(%)', '备注'].map((t, i) => <HeadCell key={i} $h={20}>{t}</HeadCell>)}</tr>
        </thead>
        <tbody>
          {RATES.map(([area, rate], i) => (
            <tr key={area}>
              <RateCell $h={75} $align="center">{i + 1}</RateCell>
              <RateCell $h={75} $align="left" $fill="#fffef2">文明施工 建筑装饰工程 建筑面积{area}</RateCell>
              <RateCell $h={75} $align="center" $fill="#fffef2">{rate}</RateCell>
              <RateCell $h={75} $fill="#fffef2" />
            </tr>
          ))}
          <tr>
            <RateCell $h={75} />
            <RateCell $h={75} $fill="#fffef2" />
            <RateCell $h={75} $fill="#fffef2" />
            <RateCell $h={75} $fill="#fffef2" />
          </tr>
        </tbody>
      </RateSheet>
    </RateBox>
  </Popup>
);

export default function App() {
  return (
    <Page>
      <GlobalStyle />
      <TitleStrip><TitleMarks /></TitleStrip>
      <NavBar>
        <Brand type="button">
          <BrandLatin>GLodon</BrandLatin>
          <BrandCjk>广联达</BrandCjk>
          <Svg w={8} h={5}><path d="M0 0h8L4 4.500z" fill="#fff" /></Svg>
        </Brand>
        <NavTabs>
          <NavTab href="#edit" $active>编制</NavTab>
          <NavTab href="#report">报表</NavTab>
          <NavTab href="#analysis">分析与报告</NavTab>
        </NavTabs>
        <CaretUp type="button" aria-label="收起">
          <Svg w={11} h={7}><path d="M1 6l4.500-4L10 6" stroke="#12a5ee" strokeWidth="2" /></Svg>
        </CaretUp>
        <Service href="#service"><HeadsetIcon />在线服务学习</Service>
      </NavBar>

      <Ribbon>
        <Group $w={50}><Big $clipped icon={<CostIcon />}>费用查看</Big></Group>
        <Group $w={117} $pad={4}>
          <Big $w={42} drop icon={<SearchBooks />}>查询</Big>
          <Stack $gap={4}>
            <Small drop icon={<AddDoc />}>补充</Small>
            <Small drop icon={<InsertIcon />}>插入</Small>
            <Small $muted icon={<DeleteIcon />}>删除</Small>
          </Stack>
        </Group>
        <Group $w={90} $pad={8}>
          <Stack $two>
            <Small $tall icon={<SaveTpl />}>保存模板</Small>
            <Small $tall icon={<LoadTpl />}>载入模板</Small>
          </Stack>
        </Group>
        <Group $w={90} $pad={8}>
          <Stack $two>
            <Small $tall icon={<ReuseIcon />}>复用数据</Small>
            <Small $tall $muted icon={<ReplaceIcon />}>替换数据</Small>
          </Stack>
        </Group>
        <Group $w={126} $pad={8}>
          <Stack $two>
            <Small $tall drop icon={<InstallIcon />}>安装费用</Small>
            <Small $tall $muted icon={<DetailDoc />}>编辑实物量明细</Small>
          </Stack>
        </Group>
        <Group $w={160} $pad={8}>
          <Stack $w="72px">
            <Small drop icon={<PaintIcon />}>颜色</Small>
            <Small drop icon={<FilterIcon />}>过滤</Small>
            <Small drop icon={<ExpandIcon />}>展开到</Small>
          </Stack>
          <Divider $gap={4} />
          <Big $w={48} drop icon={<NineGrid />}>其他</Big>
          <ArrowStack><BigArrow /><BigArrow down /></ArrowStack>
        </Group>
        <Group $w={171} $pad={8}>
          <Stack $w="82px">
            <Small icon={<EarthIcon />}>土方折算</Small>
            <Small icon={<CalcIcon />}>计算器</Small>
            <Small icon={<OmegaIcon />}>特殊符号</Small>
          </Stack>
          <Stack $two>
            <Small $tall icon={<FxIcon />}>图元公式</Small>
            <Small $tall icon={<HandbookIcon />}>五金手册</Small>
          </Stack>
        </Group>
        <Group $w={183} $pad={4}>
          <Big icon={<EditSheet />}>修改送审</Big>
          <Big drop icon={<NoteSheet />}>增减说明</Big>
          <Big drop icon={<ConvertSheet />}>数据转换</Big>
        </Group>
      </Ribbon>

      <Body>
        <Sidebar>
          <SideTools>
            <button type="button">建<Down /></button>
            <button type="button">导入导出<Down /></button>
            <button type="button" aria-label="上移"><BigArrow color="#b5b5b5" /></button>
            <button type="button" aria-label="下移"><BigArrow down color="#b5b5b5" /></button>
            <Collapse type="button" aria-label="收起侧栏"><ChevronsLeft /></Collapse>
          </SideTools>
          <ProjectTitle>
            <Svg w={4} h={12}><path d="M1 0h2v9H1z" fill="#2f86a8" /><path d="M0 9h3v2H0z" fill="#3fae49" /></Svg>
            <span>夹层及雨篷结算预算{D}</span>
          </ProjectTitle>
          <TreeItem href="#a" $house><Stub $mark="#8a8a8a" /><HouseIcon />车行坡道雨蓬</TreeItem>
          <TreeItem href="#b"><Stub />雨蓬</TreeItem>
          <TreeItem href="#c"><Stub />2016年9月1日设计变更</TreeItem>
          <TreeItem href="#d"><Stub /><span>2016年9月10日变更增{D}</span></TreeItem>
          <TreeItem href="#e" $house><Stub $mark="#00a2dc" /><HouseIcon />1号交通核钢结构夹层</TreeItem>
          <TreeItem href="#f" $current><Stub />夹层</TreeItem>
        </Sidebar>

        <Content>
          <ModuleTabs>
            {['造价分析', '工程概况', '取费设置', '分部分项', '措施项目', '其他项目', '人材机汇总', '费用汇总'].map((t) => (
              <ModuleTab key={t} href="#module" $active={t === '措施项目'} $wide={t.length > 4}>{t}</ModuleTab>
            ))}
          </ModuleTabs>
          <GridArea><MainGrid /></GridArea>
          <DetailPanel>
            <DetailTabs>
              {['详细对比', '工料机显示', '单价构成', '标准换算', '换算信息', '特征及内容', '工程量明细', '说明信息'].map((t) => (
                <DetailTab key={t} href="#detail" $active={t === '详细对比'} $wide={t.length > 4}>{t}</DetailTab>
              ))}
            </DetailTabs>
            <DetailGrid />
          </DetailPanel>
          <RatePicker />
        </Content>
      </Body>
    </Page>
  );
}
